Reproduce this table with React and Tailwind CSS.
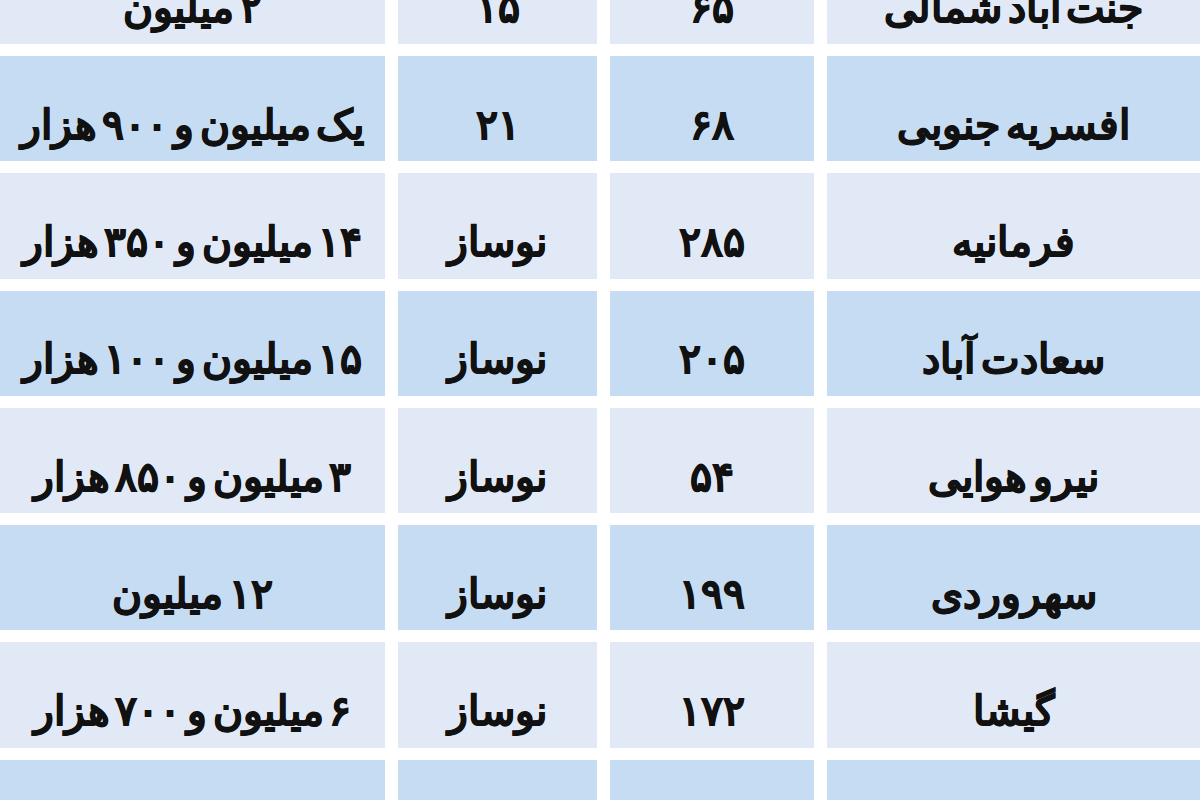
const rows = [
  ["جنت آباد شمالی", "۶۵", "۱۵", "۲ میلیون"],
  ["افسریه جنوبی", "۶۸", "۲۱", "یک میلیون و ۹۰۰ هزار"],
  ["فرمانیه", "۲۸۵", "نوساز", "۱۴ میلیون و ۳۵۰ هزار"],
  ["سعادت آباد", "۲۰۵", "نوساز", "۱۵ میلیون و ۱۰۰ هزار"],
  ["نیرو هوایی", "۵۴", "نوساز", "۳ میلیون و ۸۵۰ هزار"],
  ["سهروردی", "۱۹۹", "نوساز", "۱۲ میلیون"],
  ["گیشا", "۱۷۲", "نوساز", "۶ میلیون و ۷۰۰ هزار"],
  ["", "", "", ""],
];

export default function App() {
  return (
    <div className="w-[1200px] h-[800px] overflow-hidden bg-white">
      <div
        dir="rtl"
        className="grid grid-cols-[373px_204px_199px_385px] auto-rows-[105.25px] gap-x-[13px] gap-y-[12px] -mt-[61.25px] text-[#111] font-bold text-[41px] [word-spacing:-5px] [-webkit-text-stroke:0.8px_#111]"
        style={{ fontFamily: '"Noto Sans", sans-serif' }}
      >
        {rows.map((r, i) =>
          r.map((c, j) => (
            <div
              key={i + "-" + j}
              className={
                (i % 2 === 0 ? "bg-[#e2e9f6]" : "bg-[#c6dcf3]") +
                " flex items-center justify-center pt-[30px] whitespace-nowrap"
              }
            >
              {c}
            </div>
          ))
        )}
      </div>
    </div>
  );
}
